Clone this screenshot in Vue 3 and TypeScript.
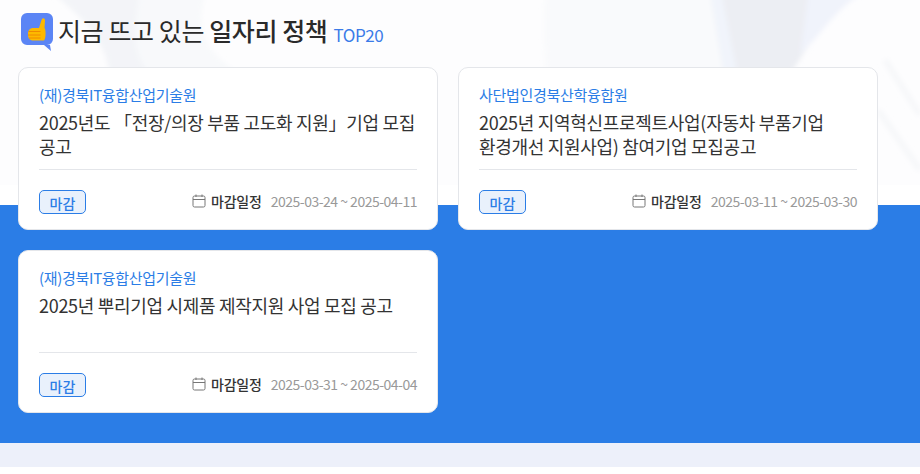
<template>
  <div class="page">
    <section class="policy">
      <svg class="photo" width="920" height="185" viewBox="0 0 920 185" aria-hidden="true">
        <defs>
          <filter id="soft" x="-10%" y="-10%" width="120%" height="120%"><feGaussianBlur stdDeviation="2.5" /></filter>
        </defs>
        <rect width="920" height="185" fill="#fdfdfe" />
        <g filter="url(#soft)">
          <path d="M55 -5 L140 -5 C135 25 130 50 150 75 L110 75 C105 40 85 20 55 -5Z" fill="#f3f4f8" />
          <path d="M140 -5 H205 C195 30 205 50 240 75 H150 C130 50 135 25 140 -5Z" fill="#f8f9fb" />
          <path d="M545 -5 H712 L745 190 H550 C555 120 540 60 545 -5Z" fill="#f9fafc" />
          <path d="M710 -5 H725 L790 190 H743 Z" fill="#f1f4fb" />
          <path d="M722 -5 H812 L825 20 L793 70 L790 190 H760 Z" fill="#eceef3" />
          <path d="M808 -5 H860 C835 10 825 30 800 55 Z" fill="#f0f3fb" />
          <path d="M793 75 C815 45 835 15 865 -5 H925 V190 H793 Z" fill="#fdfdfe" />
        </g>
        <path d="M885 60 L920 115 M878 110 L920 170" stroke="#f6f7f9" stroke-width="6" fill="none" filter="url(#soft)" />
      </svg>

      <div class="inner">
        <h2 class="heading">
          <svg class="thumb" width="32" height="38" viewBox="0 0 32 38" aria-hidden="true">
            <path d="M6 0H26A6 6 0 0 1 32 6V26A6 6 0 0 1 26 32H29L30 38L23 32H6A6 6 0 0 1 0 26V6A6 6 0 0 1 6 0Z" fill="#5b85f5" />
            <path d="M18 15 L20.500 7 C21.500 4 24.500 5 24 8 L23.500 15 C25 16 25 26 23 27.500 H12.500 C8.500 27.500 7 25 7 21.500 C7 17.500 8.500 15 12.500 15Z" fill="#fdb900" />
            <path d="M7.500 18.500H19.500M7 22H19.500M8 25H19.500" stroke="#f08a00" stroke-width="1" fill="none" />
          </svg>
          <span>지금 뜨고 있는 <b>일자리 정책</b></span>
          <small>TOP20</small>
        </h2>

        <div class="grid">
          <article v-for="item in items" :key="item.title" class="card">
            <p class="org">{{ item.org }}</p>
            <h3 class="title">{{ item.title }}</h3>
            <div class="meta">
              <span class="badge">마감</span>
              <div class="period">
                <svg width="14" height="14" viewBox="0 0 14 14" aria-hidden="true">
                  <rect x="1" y="2" width="12" height="11" rx="1.500" fill="none" stroke="#777" />
                  <path d="M1 5.500H13M4 0.500V3M10 0.500V3" fill="none" stroke="#777" />
                </svg>
                <strong>마감일정</strong>
                <span class="dates">{{ item.dates }}</span>
              </div>
            </div>
          </article>
        </div>
      </div>
    </section>
    <div class="strip"></div>
  </div>
</template>

<script setup lang="ts">
interface Policy {
  org: string
  title: string
  dates: string
}

const items: Policy[] = [
  {
    org: '(재)경북IT융합산업기술원',
    title: '2025년도 「전장/의장 부품 고도화 지원」기업 모집 공고',
    dates: '2025-03-24 ~ 2025-04-11'
  },
  {
    org: '사단법인경북산학융합원',
    title: '2025년 지역혁신프로젝트사업(자동차 부품기업 환경개선 지원사업) 참여기업 모집공고',
    dates: '2025-03-11 ~ 2025-03-30'
  },
  {
    org: '(재)경북IT융합산업기술원',
    title: '2025년 뿌리기업 시제품 제작지원 사업 모집 공고',
    dates: '2025-03-31 ~ 2025-04-04'
  }
]
</script>

<style>
body {
  background: #fff;
}
</style>

<style scoped>
.page {
  width: 920px;
  font-family: "Noto Sans CJK KR", "Noto Sans", sans-serif;
}

.policy {
  position: relative;
  height: 443px;
  background: linear-gradient(#fff 205px, #2b7de6 205px);
  overflow: hidden;
}

.photo {
  position: absolute;
  top: 0;
  left: 0;
}

.inner {
  position: relative;
  padding: 13px 42px 0 18px;
}

.heading {
  display: flex;
  align-items: center;
  gap: 5px;
  height: 38px;
  margin: 0 0 16px 3px;
  font-size: 25px;
  font-weight: 400;
  letter-spacing: -0.4px;
  color: #2a2a2a;
}

.heading span {
  margin-top: -4px;
}

.heading b {
  font-weight: 500;
}

.heading small {
  margin: 5px 0 0 1px;
  font-size: 17px;
  color: #3b7be8;
}

.grid {
  display: grid;
  grid-template-columns: 420px 420px;
  gap: 20px;
}

.card {
  box-sizing: border-box;
  height: 163px;
  padding: 16px 20px 0;
  background: #fff;
  border: 1px solid #e4e6ea;
  border-radius: 10px;
}

.org {
  margin: 0;
  font-size: 15px;
  line-height: 22px;
  letter-spacing: -0.3px;
  color: #2b7de6;
}

.title {
  height: 48px;
  margin: 4px 0 11px;
  font-size: 18px;
  font-weight: 400;
  line-height: 24px;
  letter-spacing: -0.3px;
  word-break: keep-all;
  color: #333;
}

.meta {
  display: flex;
  align-items: center;
  justify-content: space-between;
  padding-top: 20px;
  border-top: 1px solid #e4e6ea;
}

.badge {
  box-sizing: border-box;
  width: 47px;
  height: 24px;
  font-size: 14px;
  font-weight: 500;
  line-height: 24px;
  text-align: center;
  color: #2b7de6;
  background: #e9f1fc;
  border: 1px solid #2b7de6;
  border-radius: 5px;
}

.period {
  display: flex;
  align-items: center;
  margin-top: -2px;
  font-size: 14px;
  letter-spacing: -0.5px;
}

.period strong {
  margin: 0 9px 0 5px;
  font-weight: 500;
  letter-spacing: -0.2px;
  color: #333;
}

.dates {
  color: #999;
}

.strip {
  height: 24px;
  background: #edf0fa;
}
</style>
